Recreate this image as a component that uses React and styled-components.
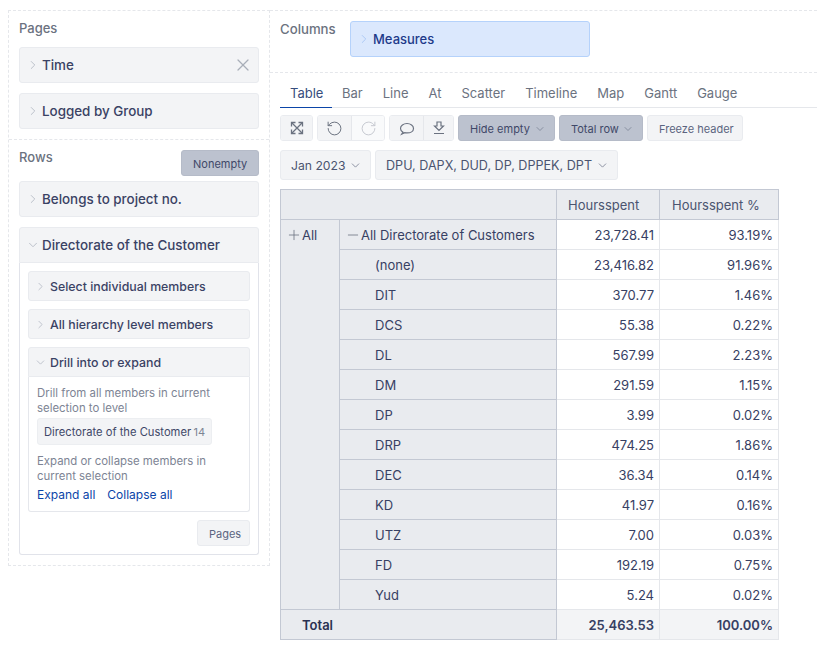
import React from "react";
import styled, { createGlobalStyle } from "styled-components";
import { ChevronRight, ChevronDown, X, Plus, Minus, RotateCcw, RotateCw } from "lucide-react";

const Global = createGlobalStyle`
    html, body { margin: 0; padding: 0; background: #fff; }
    body { font-family: Inter, "Liberation Sans", sans-serif; font-size: 13px; color: #374063; }
    * { box-sizing: border-box; }
`;

const Page = styled.div`
    display: flex;
    width: 817px;
    height: 649px;
    padding: 10px 0 0 8px;
    overflow: hidden;
`;

const Left = styled.div`
    width: 262px;
    height: 556px;
    flex-shrink: 0;
    border: 1px dashed #e5e7eb;
`;

const Section = styled.div`
    padding: 10px 10px 0;
    ${p => p.$line && "border-bottom: 1px dashed #e5e7eb;"}
`;

const LabelRow = styled.div`
    display: flex;
    justify-content: space-between;
    align-items: flex-start;
    height: 26px;
    margin-bottom: ${p => p.$mb || 0}px;
`;

const Label = styled.div`
    font-size: 13px;
    line-height: 16px;
    margin-top: -1px;
    color: #6b7280;
    font-weight: 500;
`;

const Field = styled.div`
    display: flex;
    align-items: center;
    height: 36px;
    padding-left: 6px;
    background: #f3f4f6;
    border: 1px solid #e9ebef;
    border-radius: 3px;
    margin-bottom: 10px;
    font-size: 13.4px;
    font-weight: 500;
    color: #3a4264;
    ${p => p.$open && "border-radius: 3px 3px 0 0; margin-bottom: 0;"}
    svg { color: #b4b9c4; flex-shrink: 0; margin-right: 2px; }
`;

const Close = styled.span`
    display: flex;
    margin-left: auto;
    svg { margin-right: 5px; color: #a9aeb9; }
`;

const FlatButton = styled.div`
    display: inline-flex;
    align-items: center;
    justify-content: space-between;
    width: ${p => p.$w}px;
    height: 26px;
    padding: 1px 8px 0 11px;
    border: 1px solid ${p => (p.$active ? "#b5bbc8" : "#e9ebef")};
    border-radius: 3px;
    background: ${p => (p.$active ? "#bcc2cf" : "#f3f4f6")};
    color: ${p => (p.$active ? "#3f4868" : "#5b6480")};
    font-size: 11px;
    white-space: nowrap;
    svg { flex-shrink: 0; color: #767d90; }
`;

const Open = styled.div`
    height: 292px;
    padding: 8px 8px 0;
    border: 1px solid #e1e3ea;
    border-top: 0;
    border-radius: 0 0 3px 3px;
`;

const SubField = styled(Field)`
    height: 30px;
    font-size: 12.35px;
    padding-left: 5px;
    margin-bottom: ${p => (p.$open ? 0 : 8)}px;
    svg { margin-right: 3px; }
`;

const SubBody = styled.div`
    height: 135px;
    padding: 9px 8px 0;
    border: 1px solid #e5e7ec;
    border-top: 0;
    border-radius: 0 0 3px 3px;
`;

const Help = styled.div`
    font-size: 11.4px;
    line-height: 15px;
    color: #7d8494;
`;

const Chip = styled.div`
    display: flex;
    align-items: center;
    justify-content: space-between;
    width: 175px;
    height: 27px;
    margin: 2px 0 9px;
    padding: 0 6px;
    background: #f3f4f6;
    border: 1px solid #eceef1;
    border-radius: 3px;
    font-size: 11.2px;
    color: #3f4868;
    white-space: nowrap;
`;

const Count = styled.span`
    color: #7d8494;
    font-size: 11px;
`;

const Links = styled.div`
    display: flex;
    gap: 12px;
    margin-top: 2px;
    font-size: 12px;
    line-height: 17px;
    color: #0b45a8;
`;

const PagesRow = styled.div`
    display: flex;
    justify-content: flex-end;
    margin-top: 8px;
`;

const Right = styled.div`
    flex: 1;
    min-width: 0;
`;

const Columns = styled.div`
    display: flex;
    height: 63px;
    padding: 10px 0 0 10px;
    border-top: 1px dashed #e5e7eb;
    border-bottom: 1px dashed #e5e7eb;
`;

const ColumnsLabel = styled(Label)`
    width: 70px;
    margin-top: 0;
    font-size: 13.2px;
`;

const Measure = styled(Field)`
    width: 240px;
    background: #dbe8fd;
    border-color: #b5d2fb;
    color: #1e3a8a;
    font-size: 13px;
    svg { color: #a6c5f3; }
`;

const Main = styled.div`
    padding-left: 10px;
`;

const Tabs = styled.div`
    display: flex;
    height: 35px;
    border-bottom: 1px solid #e5e7eb;
`;

const Tab = styled.div`
    height: 35px;
    padding: 11px 10px 0;
    font-size: 13px;
    line-height: 18px;
    white-space: nowrap;
    color: ${p => (p.$active ? "#374d7d" : "#6b7280")};
    ${p => p.$active && "width: 52px; border-bottom: 1px solid #0b45a8;"}
`;

const Toolbar = styled.div`
    display: flex;
    gap: 4px;
    margin-top: 7px;
`;

const Group = styled.div`
    display: flex;
    height: 26px;
    border: 1px solid #e9ebef;
    border-radius: 3px;
    overflow: hidden;
`;

const IconButton = styled.div`
    display: flex;
    align-items: center;
    justify-content: center;
    width: ${p => p.$w}px;
    background: ${p => (p.$off ? "#f9fafb" : "#f3f4f6")};
    color: ${p => (p.$off ? "#c6c9d0" : "#6b7280")};
    & + & { border-left: 1px solid #e5e7eb; }
`;

const Selects = styled.div`
    display: flex;
    gap: 4px;
    margin-top: 9px;
`;

const Select = styled.div`
    display: flex;
    align-items: center;
    justify-content: space-between;
    width: ${p => p.$w}px;
    height: 30px;
    padding: 0 8px 0 10px;
    background: #f3f4f6;
    border: 1px solid #e9ebef;
    border-radius: 3px;
    font-size: ${p => p.$size}px;
    color: #4b5470;
    white-space: nowrap;
    svg { flex-shrink: 0; color: #767d90; }
`;

const Table = styled.table`
    width: 498px;
    margin-top: 9px;
    table-layout: fixed;
    border-collapse: collapse;
    border: 1px solid #c3c8d3;
    font-size: 13px;
    color: #374063;
`;

const Head = styled.th`
    height: 30px;
    padding: 0 0 0 ${p => p.$pad || 10}px;
    background: #e9ebef;
    border: 1px solid #c3c8d3;
    font-weight: 400;
    text-align: left;
    color: #4b5470;
`;

const Member = styled.td`
    height: 30px;
    padding: 0 0 0 ${p => p.$pad || 5}px;
    background: #e9ebef;
    border: 1px solid #c3c8d3;
    vertical-align: ${p => (p.$top ? "top" : "middle")};
    ${p => p.$top && "padding-top: 7px;"}
    white-space: nowrap;
    svg { color: #6b7280; vertical-align: -3px; }
`;

const Num = styled.td`
    height: 30px;
    padding: 0 5px 0 0;
    text-align: right;
    background: #fff;
    border: 1px solid #e5e7eb;
`;

const TotalLabel = styled.td`
    height: 30px;
    padding-left: 21px;
    background: #e9ebef;
    border: 1px solid #c3c8d3;
    font-weight: 600;
    color: #2a3152;
`;

const TotalNum = styled(Num)`
    background: #f3f4f6;
    font-weight: 600;
    border-top: 1px solid #c3c8d3;
`;

const FullscreenIcon = () => <svg width="16" height="16" viewBox="0 0 16 16" fill="none" stroke="currentColor" strokeWidth="1.3">
    <path d="M3 3l10 10M13 3L3 13"/>
    <path d="M2.500 6.500v-4h4M9.500 2.500h4v4M13.500 9.500v4h-4M6.500 13.500h-4v-4"/>
</svg>;

const CommentIcon = () => <svg width="16" height="16" viewBox="0 0 16 16" fill="none" stroke="currentColor" strokeWidth="1.2">
    <path d="M4 12.200C2.400 11.200 1.500 9.900 1.500 8.400 1.500 5.600 4.400 3.500 8 3.500s6.500 2.100 6.500 4.900-2.900 4.500-6.500 4.500c-.8 0-1.500-.1-2.200-.3L2.800 14z"/>
</svg>;

const DownloadIcon = () => <svg width="16" height="16" viewBox="0 0 16 16" fill="none" stroke="currentColor" strokeWidth="1.2">
    <path d="M6 2h4v4h2.500L8 10.500 3.500 6H6z"/>
    <path d="M3 13.500h10"/>
</svg>;

const rows = [
    ["(none)", "23,416.82", "91.96%"],
    ["DIT", "370.77", "1.46%"],
    ["DCS", "55.38", "0.22%"],
    ["DL", "567.99", "2.23%"],
    ["DM", "291.59", "1.15%"],
    ["DP", "3.99", "0.02%"],
    ["DRP", "474.25", "1.86%"],
    ["DEC", "36.34", "0.14%"],
    ["KD", "41.97", "0.16%"],
    ["UTZ", "7.00", "0.03%"],
    ["FD", "192.19", "0.75%"],
    ["Yud", "5.24", "0.02%"],
];

const tabs = ["Table", "Bar", "Line", "At", "Scatter", "Timeline", "Map", "Gantt", "Gauge"];

export default function App() {
    return <Page>
        <Global/>
        <Left>
            <Section $line>
                <LabelRow><Label>Pages</Label></LabelRow>
                <Field><ChevronRight size={14} strokeWidth={1.5}/>Time<Close><X size={20} strokeWidth={1.5}/></Close></Field>
                <Field><ChevronRight size={14} strokeWidth={1.5}/>Logged by Group</Field>
            </Section>
            <Section>
                <LabelRow $mb={5}>
                    <Label>Rows</Label>
                    <FlatButton $active $w={78}>Nonempty</FlatButton>
                </LabelRow>
                <Field><ChevronRight size={14} strokeWidth={1.5}/>Belongs to project no.</Field>
                <Field $open><ChevronDown size={14} strokeWidth={1.5}/>Directorate of the Customer</Field>
                <Open>
                    <SubField><ChevronRight size={13} strokeWidth={1.5}/>Select individual members</SubField>
                    <SubField><ChevronRight size={13} strokeWidth={1.5}/>All hierarchy level members</SubField>
                    <SubField $open><ChevronDown size={13} strokeWidth={1.5}/>Drill into or expand</SubField>
                    <SubBody>
                        <Help>Drill from all members in current selection to level</Help>
                        <Chip>Directorate of the Customer<Count>14</Count></Chip>
                        <Help>Expand or collapse members in current selection</Help>
                        <Links><span>Expand all</span><span>Collapse all</span></Links>
                    </SubBody>
                    <PagesRow><FlatButton $w={53}>Pages</FlatButton></PagesRow>
                </Open>
            </Section>
        </Left>
        <Right>
            <Columns>
                <ColumnsLabel>Columns</ColumnsLabel>
                <Measure><ChevronRight size={14} strokeWidth={1.5}/>Measures</Measure>
            </Columns>
            <Main>
                <Tabs>
                    {tabs.map((t, i) => <Tab key={t} $active={i === 0}>{t}</Tab>)}
                </Tabs>
                <Toolbar>
                    <Group><IconButton $w={31}><FullscreenIcon/></IconButton></Group>
                    <Group>
                        <IconButton $w={33}><RotateCcw size={17} strokeWidth={1.4}/></IconButton>
                        <IconButton $w={33} $off><RotateCw size={17} strokeWidth={1.4}/></IconButton>
                    </Group>
                    <Group>
                        <IconButton $w={33}><CommentIcon/></IconButton>
                        <IconButton $w={30}><DownloadIcon/></IconButton>
                    </Group>
                    <FlatButton $active $w={97}>Hide empty<ChevronDown size={12} strokeWidth={1.5}/></FlatButton>
                    <FlatButton $active $w={84}>Total row<ChevronDown size={12} strokeWidth={1.5}/></FlatButton>
                    <FlatButton $w={96}>Freeze header</FlatButton>
                </Toolbar>
                <Selects>
                    <Select $w={91} $size={12.2}>Jan 2023<ChevronDown size={13} strokeWidth={1.5}/></Select>
                    <Select $w={243} $size={12.6}>DPU, DAPX, DUD, DP, DPPEK, DPT<ChevronDown size={13} strokeWidth={1.5}/></Select>
                </Selects>
                <Table>
                    <colgroup>
                        <col style={{width: 59}}/>
                        <col style={{width: 217}}/>
                        <col style={{width: 103}}/>
                        <col style={{width: 119}}/>
                    </colgroup>
                    <thead>
                        <tr>
                            <Head colSpan={2}/>
                            <Head $pad={11}>Hoursspent</Head>
                            <Head $pad={12}>Hoursspent %</Head>
                        </tr>
                    </thead>
                    <tbody>
                        <tr>
                            <Member rowSpan={13} $top><Plus size={16} strokeWidth={1.2}/>All</Member>
                            <Member><Minus size={16} strokeWidth={1.2}/>All Directorate of Customers</Member>
                            <Num>23,728.41</Num>
                            <Num>93.19%</Num>
                        </tr>
                        {rows.map(r => <tr key={r[0]}>
                            <Member $pad={35}>{r[0]}</Member>
                            <Num>{r[1]}</Num>
                            <Num>{r[2]}</Num>
                        </tr>)}
                        <tr>
                            <TotalLabel colSpan={2}>Total</TotalLabel>
                            <TotalNum>25,463.53</TotalNum>
                            <TotalNum>100.00%</TotalNum>
                        </tr>
                    </tbody>
                </Table>
            </Main>
        </Right>
    </Page>;
}
